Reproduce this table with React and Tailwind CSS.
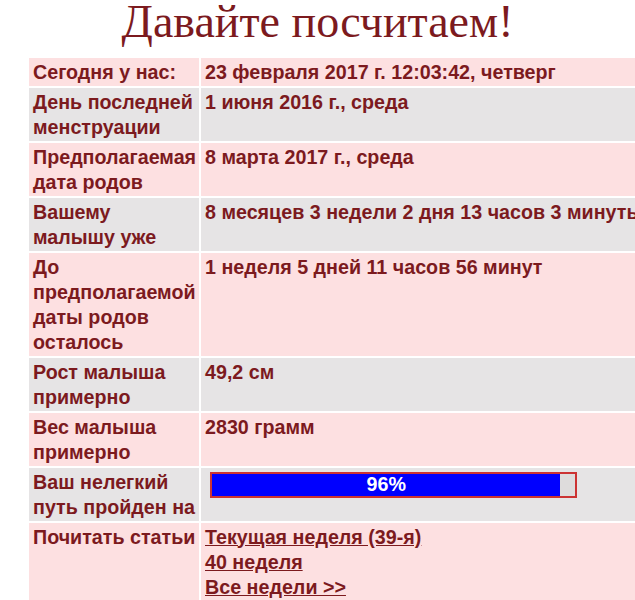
import React from 'react';

// label lines follow the wrapping seen on the page
const rows = [
  { label: ['Сегодня у нас:'], value: '23 февраля 2017 г. 12:03:42, четверг' },
  { label: ['День последней', 'менструации'], value: '1 июня 2016 г., среда' },
  { label: ['Предполагаемая', 'дата родов'], value: '8 марта 2017 г., среда' },
  { label: ['Вашему', 'малышу уже'], value: '8 месяцев 3 недели 2 дня 13 часов 3 минуты' },
  { label: ['До', 'предполагаемой', 'даты родов', 'осталось'], value: '1 неделя 5 дней 11 часов 56 минут' },
  { label: ['Рост малыша', 'примерно'], value: '49,2 см' },
  { label: ['Вес малыша', 'примерно'], value: '2830 грамм' },
  { label: ['Ваш нелегкий', 'путь пройден на'], progress: 96 },
  { label: ['Почитать статьи'], links: ['Текущая неделя (39-я)', '40 неделя', 'Все недели >>'] },
];

function Progress({ percent }) {
  return (
    <div className="ml-[5px] mt-[2.5px] w-[367px] h-[26px] border-2 border-[#cc3333] bg-[#dedcdc] flex">
      <div
        className="h-full bg-[#0000ff] text-white flex items-center justify-center leading-none"
        style={{ width: percent + '%' }}
      >
        {percent}%
      </div>
    </div>
  );
}

export default function App() {
  return (
    <div className="w-[635px] h-[600px] overflow-hidden bg-white text-[#7c1a1e]">
      <h1 className="h-[58px] pt-[2px] text-center text-[46px] leading-[40px] font-normal font-['Liberation_Serif',serif]">
        Давайте посчитаем!
      </h1>
      <div className="ml-[29px] grid grid-cols-[170px_480px] gap-[2px] font-['Liberation_Sans',Arial,sans-serif] font-bold text-[19.7px] leading-[25px]">
        {rows.map((row, i) => {
          const bg = i % 2 === 0 ? 'bg-[#fde0e1]' : 'bg-[#e6e4e5]';
          return (
            <React.Fragment key={i}>
              <div className={`${bg} pl-[4px] py-[1.5px] whitespace-nowrap overflow-hidden`}>
                {row.label.map((line) => (
                  <div key={line}>{line}</div>
                ))}
              </div>
              <div className={`${bg} px-[4px] py-[1.5px] whitespace-nowrap`}>
                {row.value}
                {row.progress !== undefined && <Progress percent={row.progress} />}
                {row.links &&
                  row.links.map((l) => (
                    <div key={l}>
                      <a href="#" className="underline">{l}</a>
                    </div>
                  ))}
              </div>
            </React.Fragment>
          );
        })}
      </div>
    </div>
  );
}
